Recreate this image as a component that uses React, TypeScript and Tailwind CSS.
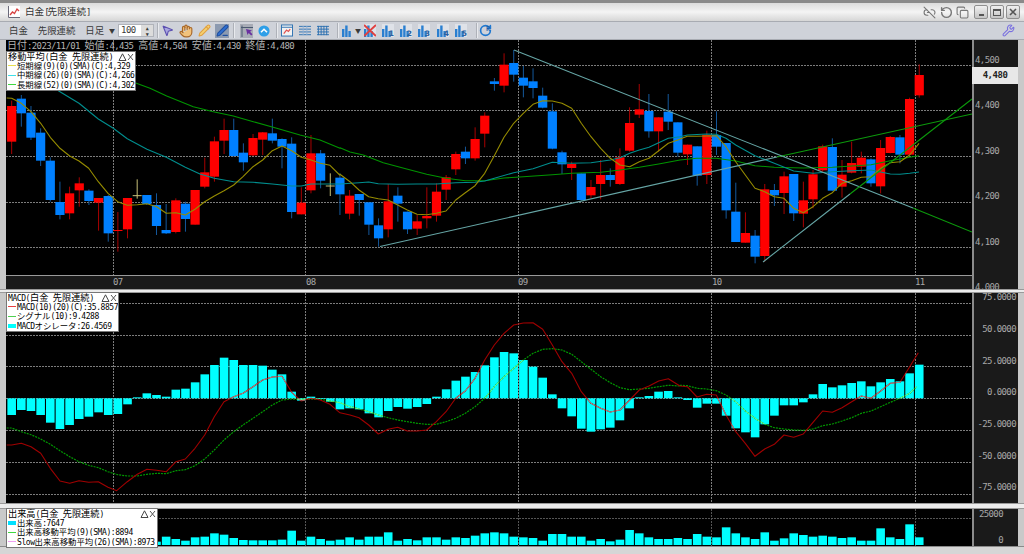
import React from 'react';
import { Copy, Hand, Link2Off, MousePointer2, Pencil, PenLine, RotateCcw, RotateCw, Wrench } from 'lucide-react';

type Candle = [number, number, number, number, string];
type Pt = [number, number];

const barX = (i: number) => 11.67 + 9.655 * i;

// values read off the 3x crops: wick top, wick bottom, body top, body bottom
const candlesA: Candle[] = [
  [122, 282, 138, 245, 'r'], [105, 200, 116, 160, 'b'], [138, 240, 158, 233, 'b'], [205, 318, 218, 302, 'b'],
  [292, 425, 302, 420, 'b'], [365, 478, 426, 465, 'b'], [380, 478, 400, 460, 'r'], [352, 440, 370, 391, 'r'],
  [388, 435, 392, 423, 'b'], [414, 512, 414, 428, 'r'], [405, 545, 408, 520, 'b'], [456, 575, 510, 512, 'r'],
  [414, 535, 414, 508, 'r'], [358, 416, 407, 410, 'd'], [405, 435, 405, 432, 'b'], [400, 525, 435, 498, 'b'],
  [432, 522, 510, 520, 'b'], [415, 520, 421, 516, 'r'], [425, 515, 431, 477, 'b'], [390, 494, 390, 494, 'r'],
  [293, 385, 337, 380, 'r'], [230, 365, 244, 350, 'r'], [176, 282, 210, 242, 'r'], [176, 290, 210, 288, 'b'],
  [250, 332, 278, 307, 'b'], [222, 288, 234, 286, 'r'], [216, 285, 217, 239, 'r'], [176, 250, 220, 242, 'b'],
  [235, 325, 237, 260, 'b'], [232, 475, 251, 456, 'b'], [382, 463, 428, 463, 'r'], [225, 400, 280, 391, 'r'],
  [270, 385, 280, 362, 'b'], [340, 408, 378, 381, 'd'],
];

const candlesB: Candle[] = [
  [400, 525, 413, 463, 'b'], [450, 538, 467, 521, 'r'], [462, 527, 462, 480, 'b'], [487, 585, 487, 554, 'b'],
  [535, 620, 556, 595, 'b'], [432, 592, 484, 568, 'r'], [442, 545, 467, 491, 'b'], [515, 582, 515, 568, 'b'],
  [525, 585, 544, 566, 'r'], [442, 565, 528, 535, 'r'], [430, 545, 455, 527, 'r'], [405, 480, 412, 449, 'r'],
  [335, 405, 342, 388, 'r'], [320, 372, 335, 355, 'b'], [262, 362, 297, 355, 'r'], [217, 322, 227, 281, 'r'],
  [114, 152, 124, 132, 'b'], [40, 157, 74, 137, 'r'], [30, 125, 69, 104, 'b'], [78, 172, 113, 137, 'b'],
  [85, 175, 124, 144, 'b'], [143, 205, 167, 203, 'b'], [190, 328, 214, 326, 'b'], [332, 402, 337, 373, 'b'],
  [365, 420, 372, 384, 'r'], [400, 482, 400, 480, 'b'], [420, 476, 441, 466, 'r'], [360, 478, 405, 432, 'r'],
  [385, 440, 405, 420, 'b'], [325, 435, 352, 432, 'r'], [202, 335, 249, 332, 'r'], [132, 234, 208, 224, 'r'],
  [162, 293, 213, 274, 'b'], [232, 335, 232, 274, 'r'], [162, 270, 215, 245, 'b'], [247, 350, 247, 338, 'b'],
  [314, 375, 314, 343, 'r'], [319, 437, 319, 407, 'b'], [272, 432, 285, 405, 'r'], [214, 345, 285, 320, 'b'],
  [309, 536, 309, 511, 'b'], [428, 606, 515, 606, 'b'], [517, 608, 579, 608, 'r'], [570, 670, 587, 650, 'b'],
  [432, 665, 448, 648, 'r'], [432, 498, 450, 466, 'b'], [395, 522, 409, 459, 'r'], [402, 543, 402, 520, 'b'],
  [425, 562, 481, 521, 'r'], [390, 505, 403, 478, 'r'], [314, 395, 319, 391, 'r'], [295, 452, 321, 452, 'b'],
  [360, 473, 404, 440, 'r'], [305, 400, 369, 398, 'r'], [335, 400, 353, 380, 'r'], [355, 440, 358, 430, 'b'],
  [300, 460, 324, 439, 'r'], [288, 340, 291, 339, 'r'], [285, 370, 292, 344, 'b'], [173, 345, 177, 344, 'r'],
  [73, 173, 105, 166, 'r'],
];

const conv = (list: Pt[], x0: number, y0: number): Pt[] => list.map(([x, y]) => [x0 + x / 3, y0 + y / 3]);
const line = (pts: Pt[]) => pts.map(([x, y]) => `${x.toFixed(1)},${y.toFixed(1)}`).join(' ');

const shortMa = [
  ...conv([[20, 114], [35, 115], [64, 130], [93, 155], [122, 190], [151, 232], [180, 265], [209, 288], [237, 303], [266, 325], [295, 365], [324, 400], [353, 425], [382, 436], [412, 434], [441, 431], [470, 440], [499, 460], [528, 458], [556, 465], [585, 448], [614, 425], [643, 408], [672, 392], [701, 375], [729, 350], [759, 320], [788, 300], [817, 272], [846, 258], [875, 272], [904, 292], [933, 300], [961, 310], [990, 316], [1019, 345]], 0, 60),
  ...conv([[0, 403], [30, 425], [57, 450], [86, 470], [115, 476], [144, 480], [173, 495], [202, 510], [231, 523], [260, 524], [289, 520], [318, 513], [347, 480], [376, 458], [405, 437], [434, 400], [463, 347], [492, 292], [521, 250], [550, 220], [579, 193], [608, 182], [637, 183], [666, 190], [695, 205], [724, 250], [753, 290], [782, 325], [811, 355], [840, 375], [869, 380], [898, 365], [927, 355], [956, 332], [985, 310], [1020, 298]], 340, 40),
  ...conv([[0, 297], [22, 289], [50, 289], [80, 288], [109, 287], [138, 320], [167, 365], [196, 405], [225, 445], [254, 455], [283, 470], [312, 475], [341, 505], [370, 518], [399, 500], [428, 475], [457, 458], [486, 430], [515, 422], [544, 412], [573, 410], [602, 385], [631, 368], [660, 365], [689, 345], [717, 310]], 680, 40),
];
const midMa = [
  ...conv([[175, 92], [237, 130], [295, 177], [340, 205], [382, 236], [441, 268], [499, 292], [556, 322], [600, 342], [643, 355], [701, 365], [759, 367], [817, 372], [875, 378], [904, 378], [933, 372], [1019, 372]], 0, 60),
  ...conv([[0, 432], [57, 428], [86, 426], [115, 431], [173, 433], [231, 432], [289, 432], [347, 428], [405, 427], [434, 423], [463, 415], [521, 398], [579, 386], [637, 367], [695, 370], [753, 368], [811, 360], [840, 353], [869, 340], [898, 330], [927, 322], [985, 295], [1020, 290]], 340, 40),
  ...conv([[0, 290], [22, 285], [80, 282], [109, 283], [138, 295], [167, 315], [225, 347], [283, 370], [341, 393], [399, 400], [457, 395], [515, 392], [573, 390], [631, 402], [660, 403], [689, 400], [717, 396]], 680, 40),
];
const longMa = [
  ...conv([[405, 68], [450, 85], [500, 108], [580, 140], [640, 155], [700, 168], [760, 185], [830, 205], [900, 225], [960, 240], [1020, 265]], 0, 60),
  ...conv([[0, 323], [30, 336], [70, 345], [130, 368], [200, 387], [260, 403], [318, 415], [376, 422], [434, 422], [492, 414], [550, 410], [637, 404], [695, 400], [782, 397], [840, 390], [898, 382], [956, 372], [1020, 360]], 340, 40),
  ...conv([[0, 360], [50, 355], [109, 355], [167, 363], [225, 377], [283, 382], [370, 384], [457, 382], [515, 378], [573, 374], [631, 362], [689, 352], [717, 347]], 680, 40),
];

const macdBars = [
  390, 375, 378, 390, 413, 432, 420, 402, 395, 382, 390, 387, 358, 337, 325, 330, 335, 314, 311, 292, 268, 240, 218, 225,
  240, 240, 242, 254, 268, 320, 347, 335, 342, 350, 373, 370, 373, 385, 397, 378, 366, 371, 366, 357, 335, 313, 287, 275,
  261, 241, 217, 201, 205, 225, 245, 278, 328, 370, 394, 431, 440, 433, 428, 406, 370, 337, 333, 320, 318, 337, 345, 368,
  356, 356, 392, 430, 442, 457, 418, 392, 361, 361, 352, 328, 297, 307, 301, 294, 289, 304, 292, 282, 289, 265, 239,
];
const macdLine = [
  ...conv([[20, 480], [35, 480], [64, 475], [93, 485], [122, 505], [151, 550], [180, 588], [209, 595], [237, 587], [266, 592], [295, 590], [324, 607], [350, 617], [382, 590], [412, 568], [441, 553], [470, 556], [499, 560], [528, 530], [556, 522], [585, 490], [614, 450], [643, 395], [672, 350], [701, 335], [729, 325], [759, 305], [788, 285], [817, 276], [846, 274], [875, 322], [904, 348], [933, 340], [961, 345], [990, 358], [1019, 383]], 0, 285),
  ...conv([[0, 383], [30, 390], [57, 398], [86, 420], [115, 447], [144, 433], [173, 427], [202, 438], [231, 438], [260, 435], [289, 410], [318, 380], [347, 340], [376, 318], [405, 280], [434, 225], [463, 180], [492, 145], [521, 120], [550, 114], [579, 113], [608, 133], [637, 180], [666, 230], [695, 265], [724, 320], [753, 355], [782, 370], [811, 381], [840, 375], [869, 345], [898, 315], [927, 303], [956, 288], [985, 281], [1020, 303]], 340, 285),
  ...conv([[0, 303], [22, 305], [51, 336], [80, 328], [109, 330], [138, 390], [167, 440], [196, 475], [225, 514], [254, 492], [283, 478], [312, 450], [341, 457], [370, 447], [399, 412], [428, 378], [457, 382], [486, 368], [515, 350], [544, 333], [573, 340], [602, 318], [631, 295], [660, 292], [689, 245], [715, 203]], 680, 285),
];
const signalLine = [
  ...conv([[20, 429], [35, 429], [64, 440], [93, 449], [122, 462], [151, 478], [180, 497], [209, 515], [237, 530], [266, 541], [295, 548], [324, 560], [353, 569], [382, 573], [412, 573], [441, 568], [470, 565], [499, 566], [528, 557], [556, 554], [585, 542], [614, 522], [643, 495], [672, 465], [701, 440], [729, 420], [759, 400], [788, 380], [817, 360], [846, 345], [875, 342], [904, 343], [933, 342], [961, 343], [990, 348]], 0, 285),
  ...conv([[0, 353], [30, 365], [57, 372], [86, 380], [115, 390], [144, 398], [173, 405], [202, 410], [231, 415], [260, 418], [289, 418], [318, 410], [347, 400], [376, 385], [405, 365], [434, 340], [463, 305], [492, 275], [521, 250], [550, 225], [579, 205], [608, 193], [637, 191], [666, 195], [695, 208], [724, 230], [753, 253], [782, 275], [811, 293], [840, 308], [869, 314], [898, 312], [927, 310], [956, 305], [985, 301], [1020, 303]], 340, 285),
  ...conv([[0, 301], [22, 302], [51, 310], [80, 312], [109, 317], [138, 330], [167, 350], [196, 378], [225, 400], [254, 418], [283, 428], [312, 432], [341, 435], [370, 436], [399, 432], [428, 422], [457, 417], [486, 408], [515, 398], [544, 385], [573, 378], [602, 365], [631, 352], [660, 340], [689, 325], [710, 305]], 680, 285),
];

// bar tops, starting at index 15 (the rest sits under the legend)
const volumeTops = [
  125, 110, 117, 122, 112, 110, 100, 104, 114, 120, 121, 121, 121, 119, 92, 122, 110, 117, 122, 119, 112, 119, 110, 110, 97, 122, 117, 121, 112, 112, 119, 112, 114, 107, 100, 97, 100,
  110, 112, 114, 122, 102, 102, 110, 110, 122, 117, 124, 119, 90, 100, 112, 117, 117, 114, 117, 102, 110, 112, 82, 100, 112, 117, 97, 122, 115, 100, 105, 110, 107, 110, 114, 112, 122, 122, 85, 112, 117, 73, 112,
];

const vLines = [113.5, 305.5, 518.5, 711.5, 915.5];

// the app's bitmap font has much narrower Latin than CJK, so the two get separate sizes
const Txt = ({ s, cjk, latin }: { s: string; cjk: string; latin: string }) => (
  <span className="block whitespace-pre text-[8px] leading-[9px]">
    {s.split(/([\u3000-\u30ff\u4e00-\u9fff]+)/).filter(Boolean).map((run, i) =>
      /[\u3000-\u30ff\u4e00-\u9fff]/.test(run) ? (
        <span key={i} className={`font-['Noto_Sans_CJK_JP',sans-serif] ${cjk}`}>{run}</span>
      ) : (
        <span key={i} className={`font-['DejaVu_Sans_Mono',monospace] ${latin}`}>{run}</span>
      ),
    )}
  </span>
);

const LegendRow = ({ s, mark }: { s: string; mark: React.ReactNode }) => (
  <div className="flex h-[9.6px] items-center">
    <div className="flex w-[9px] shrink-0 items-center">{mark}</div>
    <Txt s={s} cjk="text-[8.4px]" latin="text-[8px] tracking-[-0.42px]" />
  </div>
);

const Legend = ({ title, width, rows }: { title: string; width: string; rows: { s: string; mark: React.ReactNode }[] }) => (
  <div className={`absolute left-[1px] bg-white px-[1px] text-black outline outline-1 outline-[#777] ${width}`}>
    <div className="flex h-[9px] items-center justify-between">
      <Txt s={title} cjk="text-[9.2px]" latin="text-[8px] tracking-[-0.42px]" />
      <svg width="16" height="8" viewBox="0 0 16 8">
        <path d="M1 7.5 4.5 .8 8 7.5Z" fill="none" stroke="#444" />
        <path d="M10 1l5 6M15 1l-5 6" stroke="#555" />
      </svg>
    </div>
    {rows.map((r) => <LegendRow key={r.s} s={r.s} mark={r.mark} />)}
  </div>
);

const Mark = ({ className }: { className: string }) => <div className={`h-[1px] w-[8px] ${className}`} />;

const Axis = ({ children }: { children: React.ReactNode }) => (
  <div className="w-[46px] shrink-0 overflow-hidden border-l-2 border-[#8c8c8c] bg-[#1a1a1a] font-['DejaVu_Sans_Mono',monospace] text-[9px] leading-none tracking-[-0.6px] text-[#a8a8a8]">
    {children}
  </div>
);

const GridLines = ({ ys, top, bottom, color = '#7c7c7c' }: { ys: number[]; top: number; bottom: number; color?: string }) => (
  <g shapeRendering="crispEdges" strokeDasharray="2 1" stroke={color}>
    {ys.map((y) => <line key={y} x1="6" x2="972" y1={y} y2={y} />)}
    {vLines.map((x) => <line key={x} x1={x} x2={x} y1={top} y2={bottom} />)}
  </g>
);

const Candles = ({ list, start, y0 }: { list: Candle[]; start: number; y0: number }) => (
  <>
    {list.map(([wt, wb, bt, bb, c], k) => {
      const x = barX(start + k);
      const cy = (z: number) => y0 + z / 3;
      if (c === 'd') {
        return (
          <g key={k} stroke="#c8c078">
            <line x1={x} x2={x} y1={cy(wt)} y2={cy(wb)} />
            <line x1={x - 4.5} x2={x + 4.5} y1={cy(bt)} y2={cy(bt)} />
          </g>
        );
      }
      return (
        <g key={k}>
          <line x1={x} x2={x} y1={cy(wt)} y2={cy(wb)} stroke={c === 'r' ? '#a80000' : '#14589c'} />
          <rect x={x - 4.6} width="9.2" y={cy(bt)} height={Math.max(cy(bb) - cy(bt), 1)} fill={c === 'r' ? '#ff0000' : '#0080ff'} />
        </g>
      );
    })}
  </>
);

const PriceChart = () => (
  <svg width="966" height="235" viewBox="6 40 966 235" className="block">
    <GridLines ys={[65.5, 110.5, 156.5, 202.5, 247.5]} top={40} bottom={275} />
    <Candles list={candlesA} start={0} y0={60} />
    <Candles list={candlesB} start={34} y0={40} />
    <g fill="none" strokeLinejoin="round" strokeWidth="1.1">
      <polyline points={line(longMa)} stroke="#009400" />
      <polyline points={line(midMa)} stroke="#008e8e" />
      <polyline points={line(shortMa)} stroke="#968c00" />
      <polyline points="380,246.5 777,157" stroke="#66a6a6" />
      <polyline points="777,157 972,114" stroke="#0c9a0c" />
      <polyline points="514,50 913,208" stroke="#66a6a6" />
      <polyline points="913,208 972,232" stroke="#0c9a0c" />
      <polyline points="763,262 850,194" stroke="#66a6a6" />
      <polyline points="850,194 972,99" stroke="#0c9a0c" />
    </g>
  </svg>
);

const MacdChart = () => {
  const rects = macdBars.map((z, i) => {
    const y = 285 + z / 3;
    return { x: barX(i) - 4.3, y: Math.min(y, 398.3), h: Math.abs(y - 398.3) };
  });
  return (
    <svg width="966" height="210" viewBox="6 293 966 210" className="block">
      <defs>
        <clipPath id="macd-bars">
          {rects.map((r, i) => <rect key={i} x={r.x} y={r.y} width="8.6" height={r.h} />)}
        </clipPath>
      </defs>
      <GridLines ys={[303.5, 335.5, 366.5, 398.5, 430.5, 462.5, 494.5]} top={293} bottom={503} />
      {rects.map((r, i) => <rect key={i} x={r.x} y={r.y} width="8.6" height={r.h} fill="#00ffff" />)}
      <g fill="none" strokeLinejoin="round">
        <polyline points={line(signalLine)} stroke="#009800" strokeWidth="1.2" strokeDasharray="2 1" />
        <polyline points={line(macdLine)} stroke="#a00000" strokeWidth="1.1" />
        <g clipPath="url(#macd-bars)">
          <polyline points={line(signalLine)} stroke="#70ff90" />
          <polyline points={line(macdLine)} stroke="#b08888" />
        </g>
      </g>
    </svg>
  );
};

const VolumeChart = () => (
  <svg width="966" height="37" viewBox="6 509 966 37" className="block">
    <GridLines ys={[518.5]} top={509} bottom={546} color="#555555" />
    {volumeTops.map((z, k) => (
      <rect key={k} x={barX(15 + k) - 4.3} y={500 + z / 3} width="8.6" height={(135 - z) / 3} fill="#00ffff" />
    ))}
  </svg>
);

const Sep = ({ className }: { className: string }) => (
  <div className={`h-[15px] w-[2px] shrink-0 border-l border-[#aeb1b8] bg-[#e8eaee] ${className}`} />
);

const Bars = ({ n, cross, className }: { n?: string; cross?: boolean; className: string }) => (
  <svg width="12" height="13" viewBox="0 0 12 13" className={`shrink-0 ${className}`}>
    {(n || cross) && <rect width="12" height="13" fill="#dfe2e8" />}
    <path d="M0 5h2.400v8H0zM3.200 1.500h2.400V13H3.200zM6.400 7h2.400v6H6.400z" fill="#2a7fd0" />
    {cross && <path d="M0 1l12 11M12 1 0 12" stroke="#e04040" strokeWidth="2" />}
    {n && <text x="12" y="12" textAnchor="end" fontSize="7.500" fontFamily="DejaVu Sans" fontWeight="700" fill="#2a5fa0">{n}</text>}
  </svg>
);

const Toolbar = () => (
  <div className="flex h-[19px] items-center border-y border-[#a8abb2] bg-[#cfd2d9] pl-[9px] font-['Noto_Sans_CJK_JP',sans-serif] text-[9.4px] leading-none text-[#3a3a3a]">
    <span>白金</span>
    <span className="ml-[10px]">先限連続</span>
    <span className="ml-[10px]">日足</span>
    <span className="ml-[5px] text-[6px]">▼</span>
    <div className="ml-[3px] flex h-[13px] w-[36px] shrink-0 items-center border border-[#b0b3ba] bg-white pl-[2px] font-['DejaVu_Sans_Mono',monospace] text-[9px] tracking-[-0.6px]">
      100
      <div className="ml-auto flex h-full w-[12px] flex-col items-center justify-center bg-[#dcdcdc] text-[5px] leading-[6px]">
        <span>▲</span><span>▼</span>
      </div>
    </div>
    <Sep className="ml-[3px]" />
    <MousePointer2 size={13} className="ml-[2px] shrink-0 text-[#5b4fb0]" fill="#a9a6e0" />
    <Hand size={14} className="ml-[5px] shrink-0 text-[#a8682a]" fill="#f2c27c" />
    <Pencil size={13} className="ml-[5px] shrink-0 text-[#e0a040]" fill="#f5d070" />
    <div className="ml-[4px] flex h-[14px] w-[14px] shrink-0 items-center justify-center bg-[#8c9ab0]">
      <PenLine size={13} className="text-[#1f4fa0]" fill="#2f6fd0" />
    </div>
    <Sep className="ml-[4px]" />
    <div className="ml-[5px] flex h-[14px] w-[13px] shrink-0 items-center justify-center bg-[#a8acb6]">
      <svg width="12" height="12" viewBox="0 0 12 12"><path d="M1 .5V12M0 2.500h12" stroke="#4a5a70" /><path d="M5 4l6 1.500-2 1.200 2.500 2.500-1.300 1.300L7.700 8 6.500 10Z" fill="#6a2fa0" /></svg>
    </div>
    <svg width="12" height="12" viewBox="0 0 14 14" className="ml-[5px] shrink-0"><circle cx="7" cy="7" r="6.500" fill="#2e9fe8" /><path d="M3.500 8.500 7 5l3.500 3.500" fill="none" stroke="#fff" strokeWidth="1.800" /></svg>
    <Sep className="ml-[6px]" />
    <svg width="12" height="13" viewBox="0 0 13 13" className="ml-[3px] shrink-0"><rect x=".5" y=".5" width="12" height="12" fill="#f2f2f2" stroke="#2a6fb0" /><path d="M.5 3h12" stroke="#2a6fb0" /><path d="M3 10l3-4 2 1.500L10 5" fill="none" stroke="#e05050" strokeWidth="1.300" /></svg>
    <svg width="12" height="12" viewBox="0 0 13 13" className="ml-[6px] shrink-0"><path d="M0 1.500h13M0 4.500h13M0 7.500h13M0 10.500h13" stroke="#2a6fb0" /><path d="M4.500 1v10M8.500 1v10" stroke="#8fb0d8" /></svg>
    <svg width="12" height="12" viewBox="0 0 13 13" className="ml-[6px] shrink-0"><path d="M0 1.500h13M0 4.500h13M0 7.500h13M0 10.500h13M1.500 1v10M4.500 1v10M7.500 1v10M10.500 1v10" stroke="#2a6fb0" /></svg>
    <Sep className="ml-[8px]" />
    <Bars className="ml-[3px]" />
    <span className="ml-[1px] w-[5px] shrink-0 text-[6px]">▼</span>
    <Bars cross className="ml-[4px]" />
    <Bars n="1" className="ml-[6px]" />
    <Bars n="2" className="ml-[6px]" />
    <Bars n="3" className="ml-[6px]" />
    <Bars n="4" className="ml-[7px]" />
    <Bars n="5" className="ml-[6px]" />
    <Sep className="ml-[9px]" />
    <div className="relative ml-[1px] shrink-0">
      <RotateCw size={13} strokeWidth={3} className="text-[#1f78d0]" />
      <span className="absolute left-[7px] top-[2px] text-[6px] font-bold text-[#1f5fa8]">R</span>
    </div>
    <Wrench size={13} className="ml-auto mr-[9px] text-[#7a70e0]" />
  </div>
);

const WinButton = ({ children }: { children: React.ReactNode }) => (
  <div className="flex h-[14px] w-[14px] items-center justify-center rounded-[2px] border border-[#8f8f8f] bg-gradient-to-b from-[#f0f0f0] to-[#c4c4c4]">
    {children}
  </div>
);

const TitleBar = () => (
  <div className="flex h-[21px] items-center border-t-[3px] border-[#8a8a8a] bg-gradient-to-b from-[#dcdcdc] via-[#f4f4f4] to-[#d6d6d6] pl-[8px] pr-[4px]">
    <svg width="12" height="12" viewBox="0 0 12 12" className="bg-white">
      <path d="M.5 0v11.500H12" fill="none" stroke="#6a6a7a" />
      <path d="M2 9l2.500-3 2 1.500L9 3l2 2" fill="none" stroke="#d84040" strokeWidth="1.300" />
    </svg>
    <span className="ml-[5px] text-[#333]">
      <Txt s="白金[先限連続]" cjk="text-[9.6px]" latin="text-[9px] tracking-[-2px]" />
    </span>
    <div className="ml-auto flex items-center">
      <Link2Off size={13} className="text-[#777]" />
      <RotateCcw size={13} strokeWidth={2.600} className="ml-[4px] text-[#777]" />
      <Copy size={13} className="ml-[3px] text-[#777]" />
      <div className="ml-[5px] flex gap-[2px] text-[#444]">
        <WinButton><div className="mt-[6px] h-[2px] w-[5px] bg-[#555]" /></WinButton>
        <WinButton><div className="h-[7px] w-[8px] border border-t-2 border-[#555]" /></WinButton>
        <WinButton><svg width="8" height="8" viewBox="0 0 8 8"><path d="M1 1l6 6M7 1 1 7" stroke="#555" strokeWidth="1.600" /></svg></WinButton>
      </div>
    </div>
  </div>
);

const Divider = ({ className }: { className: string }) => (
  <div className={`shrink-0 border-y border-[#9a9a9a] bg-[#ececec] ${className}`} />
);

const App: React.FC = () => {
  return (
    <div className="flex h-[554px] w-[1024px] flex-col overflow-hidden bg-[#c9c9c9]">
      <TitleBar />
      <Toolbar />

      {/* Price pane */}
      <div className="flex h-[249px] shrink-0 pl-[6px]">
        <div className="w-[966px] shrink-0">
          <div className="relative h-[235px] bg-black">
            <PriceChart />
            <div className="absolute left-[1px] top-[0px] text-[#b4b4b4]">
              <Txt s="日付:2023/11/01 始値:4,435 高値:4,504 安値:4,430 終値:4,480" cjk="text-[10px]" latin="text-[9px] tracking-[-0.62px]" />
            </div>
            <div className="absolute left-0 top-[12px] w-full">
              <Legend
                title="移動平均(白金 先限連続)"
                width="w-[128px]"
                rows={[
                  { s: '短期線(9)(0)(SMA)(C):4,329', mark: <Mark className="bg-[#e8e050]" /> },
                  { s: '中期線(26)(0)(SMA)(C):4,266', mark: <Mark className="bg-[#40e0e8]" /> },
                  { s: '長期線(52)(0)(SMA)(C):4,302', mark: <Mark className="bg-[#40d840]" /> },
                ]}
              />
            </div>
          </div>
          <div className="flex h-[14px] items-center border-t border-[#9a9a9a] bg-[#1a1a1a] pl-[107px] font-['DejaVu_Sans_Mono',monospace] text-[9px] leading-none tracking-[-0.6px] text-[#a8a8a8]">
            <span className="w-[193px]">07</span>
            <span className="w-[212px]">08</span>
            <span className="w-[194px]">09</span>
            <span className="w-[203px]">10</span>
            <span>11</span>
          </div>
        </div>
        <div className="relative flex">
          <Axis>
            <div className="-mt-[2.750px] pl-[1px]">
              {['4,500', '4,400', '4,300', '4,200', '4,100', '4,000'].map((p) => (
                <div key={p} className="flex h-[45.500px] items-center">{p}</div>
              ))}
            </div>
          </Axis>
          <div className="absolute left-0 top-[27px] flex h-[17px] w-[46px] items-center justify-center bg-[#e8e8e8] font-['DejaVu_Sans_Mono',monospace] text-[9px] font-bold tracking-[-0.5px] text-[#222]">
            4,480
          </div>
        </div>
      </div>
      <Divider className="h-[4px]" />

      {/* MACD pane */}
      <div className="flex h-[210px] shrink-0 pl-[6px]">
        <div className="relative w-[966px] shrink-0 bg-black">
          <MacdChart />
          <div className="absolute left-0 top-0 w-full">
            <Legend
              title="MACD(白金 先限連続)"
              width="w-[111px]"
              rows={[
                { s: 'MACD(10)(20)(C):35.8857', mark: <Mark className="bg-[#e84040]" /> },
                { s: 'シグナル(10):9.4288', mark: <Mark className="bg-[#50d050]" /> },
                { s: 'MACDオシレータ:26.4569', mark: <div className="h-[4px] w-[8px] bg-[#00ffff]" /> },
              ]}
            />
          </div>
        </div>
        <Axis>
          <div className="-mt-[11px] flex flex-col items-end pr-[2px]">
            {['75.0000', '50.0000', '25.0000', '0.0000', '-25.0000', '-50.0000', '-75.0000'].map((p) => (
              <div key={p} className="flex h-[31.700px] items-center">{p}</div>
            ))}
          </div>
        </Axis>
      </div>
      <Divider className="h-[6px]" />

      {/* Volume pane */}
      <div className="flex h-[37px] shrink-0 pl-[6px]">
        <div className="relative w-[966px] shrink-0 bg-black">
          <VolumeChart />
          <div className="absolute left-0 top-0 w-full">
            <Legend
              title="出来高(白金 先限連続)"
              width="w-[150px]"
              rows={[
                { s: '出来高:7647', mark: <div className="h-[4px] w-[8px] bg-[#00e0ff]" /> },
                { s: '出来高移動平均(9)(SMA):8894', mark: <Mark className="bg-[#40d840]" /> },
                { s: 'Slow出来高移動平均(26)(SMA):8973', mark: <Mark className="bg-[#f0a0f0]" /> },
              ]}
            />
          </div>
        </div>
        <Axis>
          <div className="flex h-full flex-col justify-between py-[1px] pr-[15px] text-right">
            <span>25000</span>
            <span>0</span>
          </div>
        </Axis>
      </div>
      <div className="flex-1 border-t border-[#8a8a8a] bg-[#d6d6d6]" />
    </div>
  );
};

export default App;
